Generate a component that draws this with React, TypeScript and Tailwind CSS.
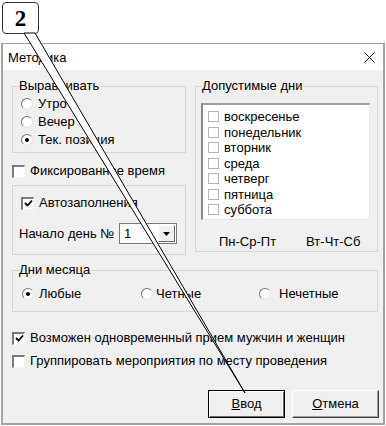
import React from 'react';

const Radio = ({ checked }: { checked?: boolean }) => (
  <span className="w-[12px] h-[12px] rounded-full bg-white border border-t-[#7a7a7a] border-l-[#7a7a7a] border-b-[#e3e3e3] border-r-[#e3e3e3] flex items-center justify-center shrink-0">
    {checked && <span className="w-[4px] h-[4px] rounded-full bg-black" />}
  </span>
);

const Check = ({ checked }: { checked?: boolean }) => (
  <span className="w-[13px] h-[13px] bg-white border-t-2 border-l-2 border-t-[#7a7a7a] border-l-[#7a7a7a] border-b border-r border-b-[#f4f4f4] border-r-[#f4f4f4] flex items-center justify-center shrink-0">
    {checked && (
      <svg width="9" height="9" viewBox="0 0 9 9">
        <path d="M1 4 L3.5 6.5 L8 1.5" fill="none" stroke="#000" strokeWidth="1.8" />
      </svg>
    )}
  </span>
);

const Group = ({
  title,
  className,
  children
}: {
  title?: string;
  className: string;
  children: React.ReactNode;
}) => (
  <div className={`relative border border-[#d5d5d5] ${className}`}>
    {title && (
      <span className="absolute -top-[9px] left-[6px] bg-[#f0f0f0] pr-[1px] leading-[16px]">
        {title}
      </span>
    )}
    {children}
  </div>
);

const days = ['воскресенье', 'понедельник', 'вторник', 'среда', 'четверг', 'пятница', 'суббота'];

export default function App() {
  return (
    <div
      className="relative w-[386px] h-[426px] bg-white overflow-hidden text-[13px] text-black"
      style={{ fontFamily: '"Liberation Sans", Arial, sans-serif' }}
    >
      {/* callout */}
      <div className="h-[43px] pt-[2px] pl-[2px]">
        <div
          className="w-[37px] h-[32px] bg-white border-[1.5px] border-[#333] rounded-[4px] flex items-center justify-center text-[23px] font-bold leading-none"
          style={{ fontFamily: '"Liberation Serif", "Times New Roman", serif' }}
        >
          2
        </div>
      </div>

      {/* window */}
      <div className="ml-[1px] w-[384px] h-[382px] border-x-2 border-b-2 border-t border-[#a3a3a3] flex flex-col">
        <div className="h-[26px] bg-white flex items-center justify-between pl-[5px] pr-[8px]">
          <span className="pt-[2px]">Методика</span>
          <svg width="11" height="11" viewBox="0 0 11 11">
            <path d="M0.5 0.5 L10.5 10.5 M10.5 0.5 L0.5 10.5" stroke="#111" strokeWidth="1" />
          </svg>
        </div>

        <div className="flex-1 bg-[#f0f0f0] pl-[9px] pr-[4px]">
          <div className="flex gap-[9px] mt-[16px]">
            {/* left column */}
            <div className="w-[174px] flex flex-col">
              <Group title="Выравнивать" className="h-[67px] pt-[8px] pl-[8px]">
                {[
                  ['Утро', false],
                  ['Вечер', false],
                  ['Тек. позиция', true]
                ].map(([label, on]) => (
                  <div key={label as string} className="h-[18px] flex items-center gap-[5px]">
                    <Radio checked={on as boolean} />
                    <span>{label}</span>
                  </div>
                ))}
              </Group>

              <div className="h-[18px] mt-[9px] flex items-center gap-[5px]">
                <Check />
                <span>Фиксированнае время</span>
              </div>

              <Group className="h-[70px] mt-[5px] pt-[8px]">
                <div className="h-[18px] pl-[8px] flex items-center gap-[5px]">
                  <Check checked />
                  <span>Автозаполнения</span>
                </div>
                <div className="mt-[11px] pl-[6px] flex items-center">
                  <span className="w-[100px]">Начало день №</span>
                  <div className="w-[58px] h-[21px] bg-white border border-[#7a7a7a] flex items-center">
                    <span className="flex-1 pl-[4px]">1</span>
                    <div className="w-[17px] h-[17px] mr-[1px] bg-[#f0f0f0] border border-t-white border-l-white border-b-[#696969] border-r-[#696969] flex items-center justify-center">
                      <svg width="7" height="4" viewBox="0 0 7 4">
                        <path d="M0 0 H7 L3.5 4 Z" fill="#000" />
                      </svg>
                    </div>
                  </div>
                </div>
              </Group>
            </div>

            {/* right column */}
            <Group title="Допустимые дни" className="w-[183px] h-[166px] pt-[16px] pl-[5px]">
              <div className="w-[169px] h-[117px] bg-white border-t-2 border-l-2 border-t-[#a0a0a0] border-l-[#8a8a8a] border-b border-r border-b-[#e8e8e8] border-r-[#e8e8e8] pt-[4px] pl-[5px]">
                {days.map((d) => (
                  <div key={d} className="h-[15.5px] flex items-center gap-[5px]">
                    <span className="w-[11px] h-[11px] border border-[#b4b4b4] bg-white shrink-0" />
                    <span className="leading-[15px]">{d}</span>
                  </div>
                ))}
              </div>
              <div className="flex mt-[12px]">
                <span className="ml-[18px]">Пн-Ср-Пт</span>
                <span className="ml-[30px]">Вт-Чт-Сб</span>
              </div>
            </Group>
          </div>

          <Group title="Дни месяца" className="w-[366px] h-[42px] mt-[15px] pt-[14px]">
            <div className="h-[18px] flex items-center">
              <div className="w-[128px] pl-[9px] flex items-center gap-[5px]">
                <Radio checked />
                <span>Любые</span>
              </div>
              <div className="w-[118px] flex items-center gap-[3px]">
                <Radio />
                <span>Четные</span>
              </div>
              <div className="flex items-center gap-[8px]">
                <Radio />
                <span>Нечетные</span>
              </div>
            </div>
          </Group>

          <div className="h-[18px] mt-[17px] flex items-center gap-[5px]">
            <Check checked />
            <span>Возможен одновременный прием мужчин и женщин</span>
          </div>
          <div className="h-[18px] mt-[5px] flex items-center gap-[5px]">
            <Check />
            <span>Группировать мероприятия по месту проведения</span>
          </div>

          <div className="flex justify-end gap-[7px] mt-[20px]">
            <button className="w-[77px] h-[28px] bg-[#f0f0f0] border border-black shadow-[inset_1px_1px_0_#fff,inset_-1px_-1px_0_#696969] flex items-center justify-center">
              <span><u>В</u>вод</span>
            </button>
            <button className="w-[87px] h-[28px] bg-[#f0f0f0] border border-t-white border-l-white border-b-[#404040] border-r-[#404040] shadow-[inset_-1px_-1px_0_#a0a0a0] flex items-center justify-center">
              <span><u>О</u>тмена</span>
            </button>
          </div>
        </div>
      </div>

      {/* pointer */}
      <svg className="absolute inset-0 pointer-events-none" width="386" height="426">
        <polygon points="24,33 35,33 245,393" fill="#fff" stroke="#000" strokeWidth="1" strokeLinejoin="round" />
      </svg>
    </div>
  );
}
